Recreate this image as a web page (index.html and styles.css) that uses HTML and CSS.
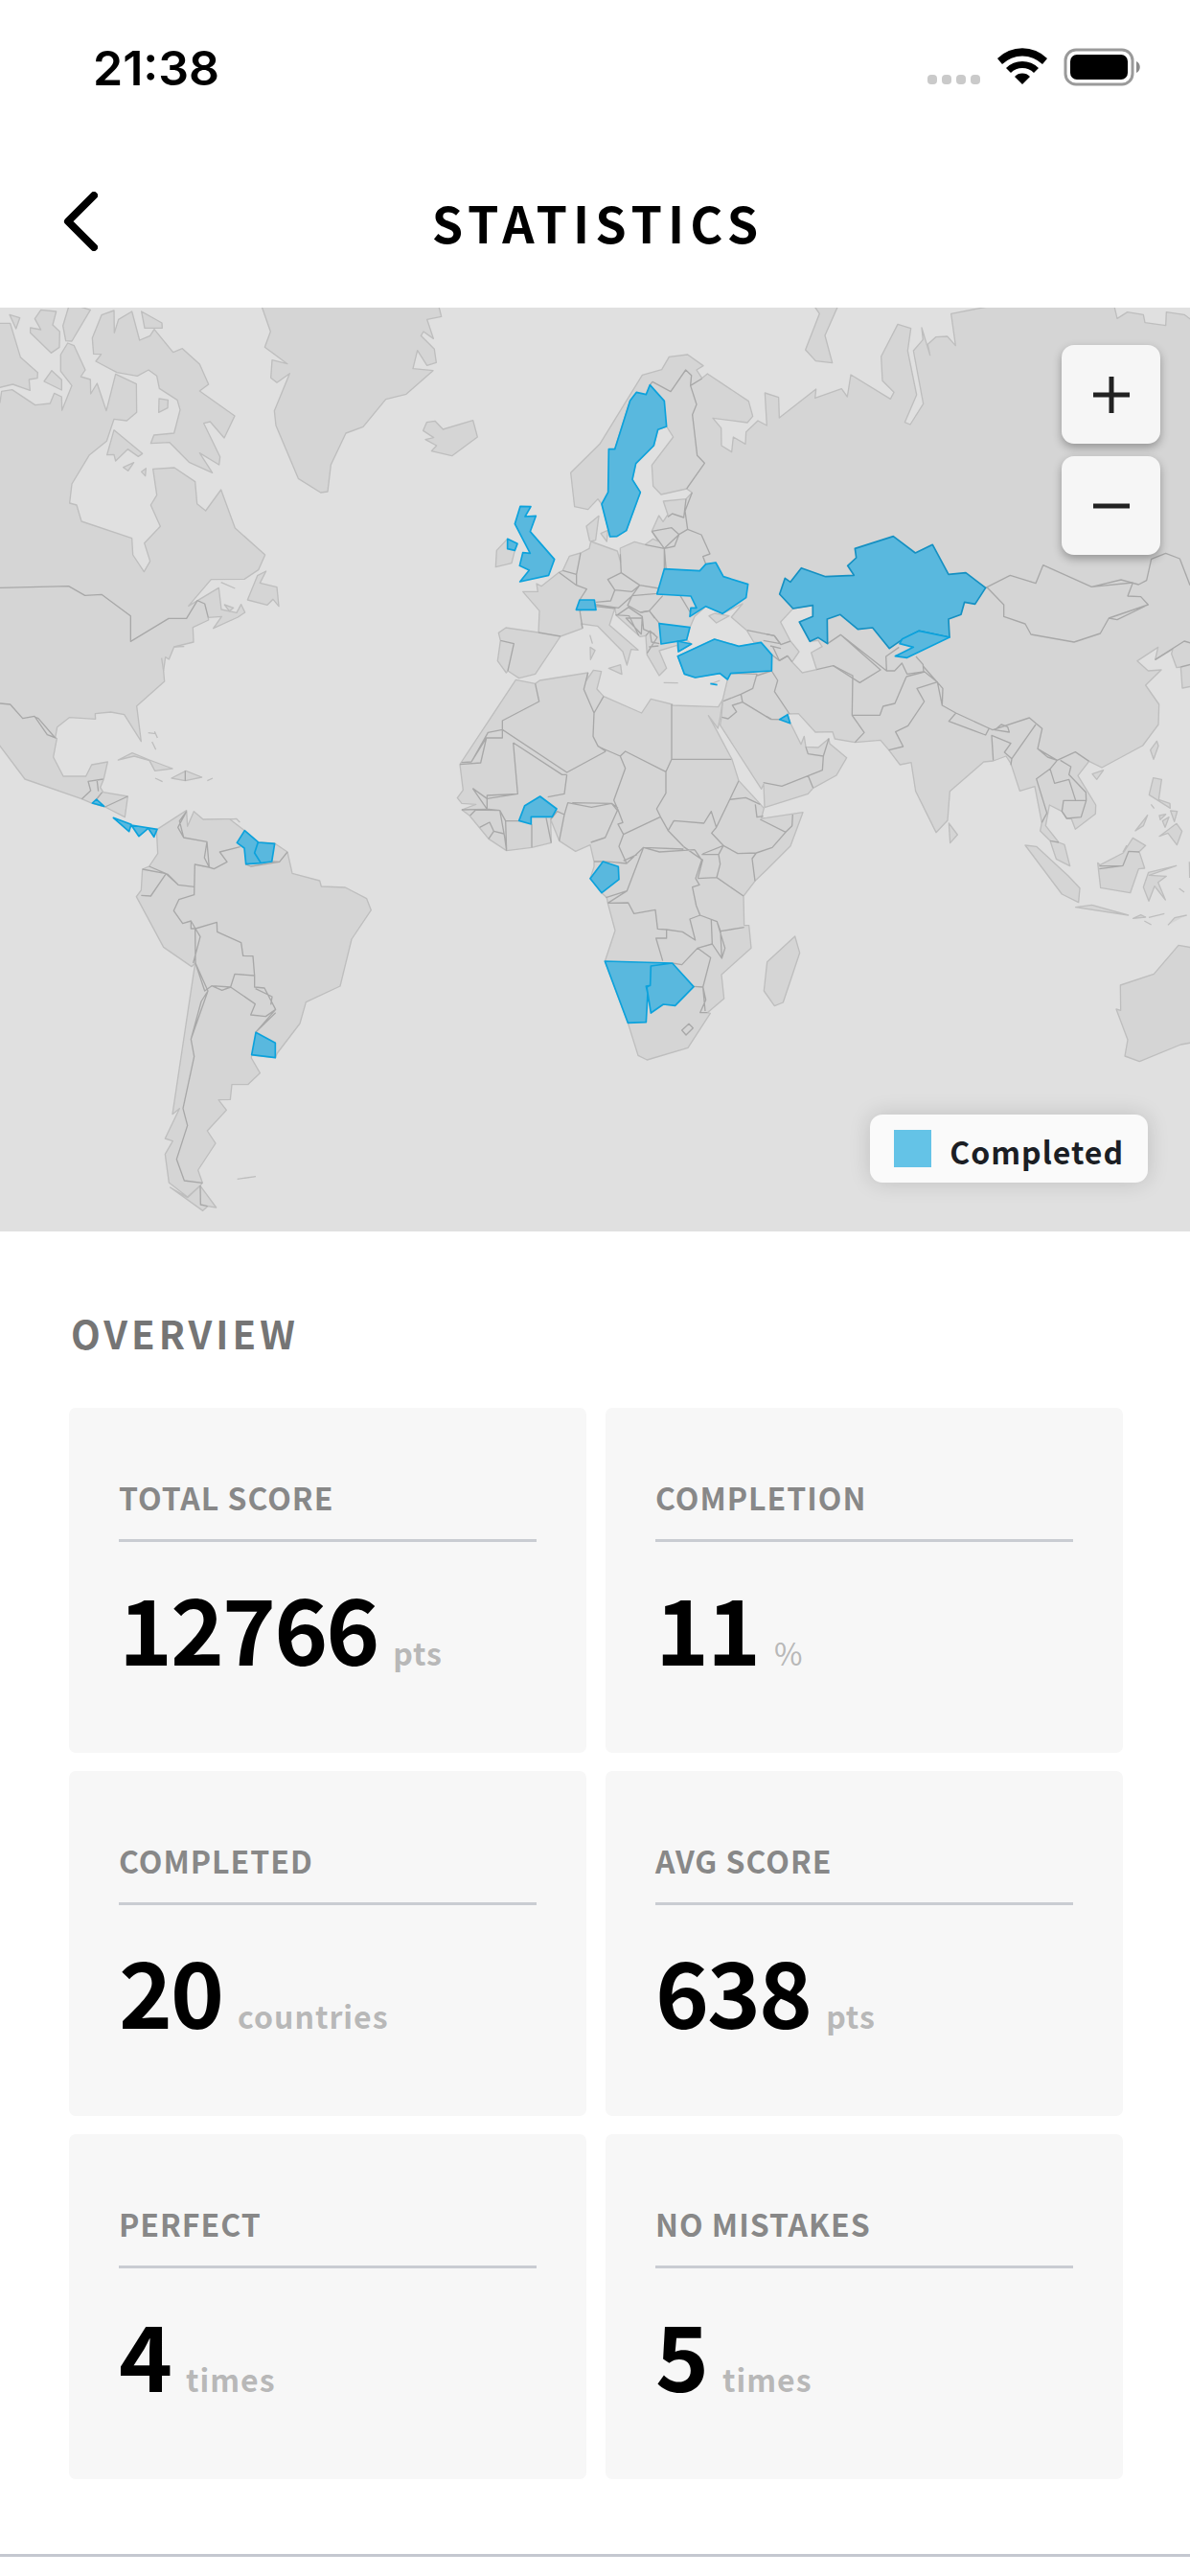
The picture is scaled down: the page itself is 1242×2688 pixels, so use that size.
FILE: index.html
```html
<!DOCTYPE html>
<html lang="en">
<head>
    <meta charset="UTF-8">
    <meta name="viewport" content="width=device-width, initial-scale=1.0">
    <title>Statistics</title>
    <link rel="stylesheet" href="styles.css">
</head>
<body>
    <div class="status">
        <span class="status__time">21:38</span>
        <svg class="status__icons" width="228" height="44" viewBox="0 0 228 44" aria-hidden="true">
            <g fill="#cacaca">
                <rect x="0" y="29" width="10" height="10" rx="4"/><rect x="15" y="29" width="10" height="10" rx="4"/><rect x="30" y="29" width="10" height="10" rx="4"/><rect x="45" y="29" width="10" height="10" rx="4"/>
            </g>
            <path d="M73 12a37 37 0 0 1 52 0l-5 6a30 30 0 0 0-42 0zM82 22a24 24 0 0 1 34 0l-5 5a17 17 0 0 0-24 0zM91 31a11 11 0 0 1 16 0l-8 8z"/>
            <rect x="144" y="3" width="70" height="36" rx="11" fill="none" stroke="#9a9a9a" stroke-width="3"/>
            <rect x="149" y="8" width="60" height="26" rx="7"/>
            <path d="M218 15c5 2 5 10 0 12z" fill="#8a8a8a"/>
        </svg>
    </div>
    <header class="header">
        <button class="header__back" type="button" aria-label="Back">
            <svg width="36" height="62" viewBox="0 0 36 62"><path d="M32 4L5 31l27 27"/></svg>
        </button>
        <h1 class="header__title">STATISTICS</h1>
    </header>

    <div class="map">
        <svg class="map__world" viewBox="0 3 3726 2892" preserveAspectRatio="xMidYMid slice" role="img" aria-label="World map">
            <!-- north america -->
            <g class="land">
                <path d="M-10 300L0 300 5 265 38 260 110 308 157 303 170 271 193 282 194 325 225 247 190 202 190 150 212 114 232 122 267 198 253 219 283 228 284 273 304 240 333 326 362 211 427 242 428 331 397 357 357 352 334 421 280 464 225 555 218 615 240 621 255 672 413 725 416 777 451 830 470 797 452 740 502 688 472 621 491 590 479 508 546 504 611 548 617 617 644 639 692 573 736 693 830 777 809 824 765 853 661 854 590 937 685 880 693 948 741 958 755 932 767 957 745 972 668 1007 694 970 652 973 653 981 604 1004 606 1050 545 1065 529 1104 518 1097 512 1140 515 1173 428 1250 442 1361 389 1277 347 1269 298 1274 299 1291 217 1286 179 1316 173 1350 178 1352 167 1410 198 1470 269 1470 287 1434 337 1425 325 1478 314 1505 323 1520 400 1533 391 1598 329 1566 289 1555 256 1541 78 1479 0 1375-10 1362z"/>
                <path d="M-10 52L32 52 64 158 118 206 117 224 91 228 94 262 40 243-10 255zM30 25L62 35 50 69zM128 10L176 15 165 57 187 78 186 127 160 145 95 82 95 66 128 72 109 38zM215 0L197 60 206 107 225 108 283 10 250 0zM138 234L162 200 193 229 193 261z"/>
                <path d="M318 26L357 12 358 82 371 40 413 15 437 105 470 91 483 71 542 143 571 131 625 180 653 243 625 264 735 342 702 411 658 360 638 365 689 470 686 495 625 458 665 520 592 487 531 425 472 428 482 402 545 396 564 323 555 292 499 256 491 217 465 198 430 217 366 206 300 171 317 149 293 148 289 98zM443 15L507 51 508 67 453 67zM498 288L526 292 525 317 497 331zM357 386L446 460 433 469 400 446 362 483 357 463 335 464zM386 503L419 488 401 514zM443 517L457 506 455 530z"/>
                <path d="M833 828L814 865 867 878 873 938 855 916 837 934 775 918 806 842zM692 863L736 882M703 933L731 943 718 953zM370 1419L414 1397 468 1419 540 1446 485 1453 468 1421 420 1407zM537 1476L582 1453 632 1473 580 1484zM464 1334L488 1337M484 1330L493 1350M476 1362L488 1387M486 1476L509 1487M649 1484L666 1476M545 1065L577 1064M506 1100L512 1140"/>
            </g>
            <path class="border" d="M0 880L215 875 266 904 318 901 409 968 409 1048 528 976 584 976 618 920 641 930 652 973M0 1242L32 1245 71 1289 108 1282 148 1340 175 1350M108 1284L120 1289 173 1350M256 1541L284 1515 276 1486 323 1479M304 1485L308 1517M302 1542L320 1520M329 1566L400 1533M580 1453L580 1484"/>
            <!-- greenland, iceland, ireland -->
            <g class="land">
                <path d="M818 -5L847 78 829 127 900 179 852 167 848 223 867 238 907 209 859 326 864 372 934 538 1004 582 1026 579 1036 495 1083 396 1137 376 1208 290 1272 274 1356 200 1293 194 1307 137 1337 184 1366 175 1360 133 1318 91 1326 78 1357 100 1337 40 1382 31 1373-5z"/>
                <path d="M1325 388L1336 362 1362 358 1387 384 1481 356 1495 408 1415 467 1351 452 1367 435 1332 416 1358 410z"/>
                <path d="M1588 728L1555 763 1552 815 1602 803 1612 763z"/>
            </g>
            <!-- eurasia -->
            <path class="land" d="M3735 45L3708 25 3652 17 3650 59 3585 50 3580 25 3530 17 3498 37 3488-5 3120-5 2978 22 2992 122 2966 93 2930 95 2905 118 2912 152 2886 66 2890 103 2860 138 2891 304 2850 369 2833 362 2870 276 2842 138 2852 68 2811 55 2759 156 2763 232 2799 268 2788 289 2664 213 2653 282 2635 257 2552 286 2555 258 2440 348 2438 284 2395 270 2401 372 2373 357 2336 392 2334 430 2296 408 2291 455 2259 435 2258 380 2232 349 2340 363 2357 343 2344 296 2215 210 2198 224 2181 198 2202 185 2153 150 2095 157 2072 197 2011 214 1878 430 1787 520 1799 626 1841 635 1872 602 1884 618 1910 720 1932 719 1961 701 2005 581 1980 541 1991 491 2047 435 2060 385 2087 375 2108 408 2041 496 2045 562 2070 588 2150 570 2167 582 2148 602 2077 609 2091 651 2076 673 2063 654 2041 703 2061 735 2045 727 2020 745 1987 736 1942 756 1943 800 1933 765 1850 735 1846 732 1836 687 1875 655 1865 731 1850 735 1845 757 1818 771 1783 781 1762 826 1750 832 1695 875 1680 867 1684 892 1637 892 1689 952 1686 1020 1584 1005 1561 1021 1567 1045 1558 1109 1585 1146 1590 1140 1625 1163 1676 1150 1755 1032 1824 1007 1820 993 1871 1000 1950 1080 1963 1122 1976 1073 1998 1075 1908 997 1925 945 1930 967 2004 1033 2022 1030 2026 1090 2064 1155 2087 1132 2064 1077 2120 1060 2124 1080 2165 1056 2150 1043 2160 1005 2175 970 2210 938 2262 961 2325 930 2290 972 2338 1013 2360 1050 2383 1051 2313 1063 2237 1041 2122 1094 2143 1150 2177 1161 2254 1148 2278 1167 2263 1230 2259 1285 2255 1310 2300 1380 2384 1510 2391 1495 2394 1568 2530 1525 2546 1507 2619 1467 2651 1412 2598 1368 2595 1352 2562 1380 2523 1378 2518 1345 2508 1370 2475 1304 2465 1275 2500 1274 2553 1332 2607 1331 2614 1353 2677 1364 2757 1357 2783 1388 2818 1434 2853 1427 2867 1517 2931 1646 2967 1608 2974 1517 3080 1425 3110 1422 3150 1407 3165 1430 3193 1516 3240 1502 3262 1615 3257 1641 3288 1672 3307 1729 3350 1751 3333 1684 3315 1677 3274 1625 3286 1560 3325 1580 3340 1602 3355 1604 3367 1636 3430 1588 3431 1560 3375 1468 3410 1423 3450 1443 3578 1374 3627 1308 3629 1245 3587 1185 3636 1137 3595 1140 3561 1109 3626 1066 3617 1105 3672 1072 3668 1087 3684 1130 3697 1128 3702 1194 3735 1188z"/>
            <path class="water" d="M2483 945L2545 935 2545 970 2503 987 2536 1048 2562 1045 2574 1064 2540 1083 2557 1136 2512 1146 2480 1112 2502 1080 2475 1047 2444 987z"/>
            <path class="land" d="M2553 3L2566 22 2522 135 2554 170 2606 176 2583 90 2625-5 2553-5z"/>
            <g transform="translate(1200 0)">
                <path class="land" d="M1020 968L1038 960 1083 968 1043 990zM681 710L703 700 700 735zM706 1132L743 1121 747 1151zM648 1066L663 1076 649 1105zM647 1028L655 1055M878 1177L923 1178M1028 1180L1054 1170"/>
                <path class="border" d="M725 446L773 294M835 245L843 235 900 266 947 198 965 215 962 247 998 225M962 247L981 306 968 338 983 466 1006 490 950 570M948 602L941 660 905 648 891 658M967 582L945 640 953 697M841 703L903 692 926 713 880 757 841 703M926 713L953 697 996 714 1023 774 1001 782 1010 806M880 757L880 821M880 757L912 750 926 713M820 745L880 757M742 775L745 833 703 854 725 887 779 892 803 872 745 833M803 872L864 882 887 840 880 757M803 872L779 905 857 898 864 882M779 905L765 935 805 957 833 952 875 905M725 887L712 921 666 925M666 933L737 943 779 905M550 832L605 872 637 884 615 918M562 826L605 838 605 872M618 771L605 838M615 949L624 1007M486 1020L555 1032M367 1045L409 1055 390 1140M616 951L664 938 727 945"/>
                <path class="border" d="M730 967L768 941 811 970 808 1025 760 975 811 975M727 965L770 968 800 1030M808 957L833 952 865 992M833 952L850 975M811 970L815 1010 850 1025M822 1030L835 1015 858 1035 826 1085M835 1015L840 1050 865 1055M832 1065L862 1062M930 905L963 960M1140 1013L1224 1030 1243 1055 1190 1045M1217 1090L1240 1108 1266 1093M1212 1062L1245 1070M1088 1148L1170 1150 1157 1195 1120 1213 1065 1235M1216 1140L1170 1155M1120 1213L1125 1238 1214 1292 1243 1292M1125 1238L1093 1248 1106 1268 1080 1290 1060 1285M1216 1140L1235 1170 1225 1205 1272 1275"/>
            </g>
            <g transform="translate(2400 0)">
                <path class="border" d="M686 880L763 841 843 866 866 809 1018 877 1147 864 1131 906 1172 908 1195 933 1072 975 1045 1023 963 1050 828 1026 810 993 743 970 743 933 690 878M1018 877L1110 855 1165 870 1190 857 1205 790 1250 772 1294 789 1326 872M1072 975L1098 980 1195 933M1217 1105L1308 1047 1335 1055M1297 1128L1335 1118M0 1025L25 1030 45 1058 75 1047M20 1065L40 1108 66 1093 80 1112M191 1055L232 1027 357 1137 292 1177 209 1124 157 1136M232 1027L376 1140 374 1095 415 1066M376 1140L401 1140 424 1116 440 1150 492 1143 490 1120 468 1095"/>
                <path class="border" d="M209 1124L270 1155 268 1279 355 1279 365 1251 402 1242 438 1158M438 1158L495 1143 535 1175 471 1195 494 1236 443 1312 404 1331 428 1377 383 1388M490 1125L552 1195 550 1248M268 1279L306 1333 277 1364M535 1175L550 1248 593 1272 697 1320 708 1325 823 1287 863 1321 849 1384 910 1420M593 1272L571 1298 686 1341 697 1320M715 1325L735 1308 755 1315 760 1332zM710 1420L705 1342 765 1367 745 1395 768 1415 765 1435M768 1415L843 1308M849 1384L880 1410 910 1420 888 1447 845 1478 878 1585 862 1615M888 1447L902 1492 947 1480 968 1546M930 1546L1001 1546 985 1598 940 1602 925 1580zM920 1420L953 1440 947 1465 1000 1520 1001 1546M910 1420L967 1394 1010 1423M888 1672L915 1677M123 1378L130 1400 178 1407 195 1352M178 1407L175 1451 48 1501-10 1490M130 1468L146 1507M0 1283L15 1291 41 1292"/>
            </g>
            <!-- africa -->
            <g transform="translate(1200 1380)">
                <path class="land" d="M415 -212L476 -200 490 -210 641 -234 636 -210 658 -242 683 -238 669 -183 690 -160 809 -108 838 -152 905 -135 905 -132 1049 -127 1063 -150 1055 -95 1048 -60 1018 -100 1043 -55 1092 37 1113 104 1165 160 1192 190 1184 222 1200 220 1314 203 1275 308 1200 383 1164 418 1128 465 1130 557 1145 557 1152 628 1059 711 1067 786 1015 830 1024 832 954 940 826 978 798 964 766 862 694 670 726 573 703 487 700 470 684 455 648 410 660 373 660 357 648 305 602 325 551 292 524 225 526 298 465 313 386 323 330 286 270 213 246 195 290 178 246 175 232 158 250 133 240 53 245 45z"/>
                <path class="land" d="M1289 591L1304 643 1252 798 1225 809 1192 762 1202 671z"/>
                <path class="border" d="M476 -200L488 -144 373 -84 373 -56 328 -47 276 45 245 47M373 -56L373 -30 323 -30 305 48 240 53M323 -30L276 45M373 -56L575 78 697 12M407 -15L421 145 325 150 325 193M407 -15L560 85 575 85M641 -234L628 -182 660 -108 657 -35 672 -5 697 12M690 -160L660 -108M680 0L742 27 758 12 885 76M903 -135L903 37 1090 37M903 37L885 76 885 143 856 192 868 217 892 260 940 310M742 27L758 65 722 165 735 195 750 235 735 240 752 272 868 217M575 85L567 145 515 155M551 292L567 210 578 173 652 187 715 175 733 197 695 282 650 297M592 173L715 175 735 190M510 220L526 298M524 225L545 200 567 210M465 240L465 313M383 230L386 323M383 230L425 230M272 213L290 195 365 197 383 230M302 250L333 234 346 262 330 286M346 262L378 270M365 197L380 280 386 323M280 128L325 160M280 128L325 193M246 195L330 193 365 197M325 160L421 145"/>
                <path class="border" d="M752 272L738 310 762 363 712 358 686 357 660 357M762 363L815 313 865 327 975 320M752 355L795 335M815 313L763 449 697 470M815 313L940 318M703 487L763 449M703 487L767 486 785 520 852 508 859 568 887 570 887 597 854 597 875 668M887 570L937 577 977 603 960 537 992 525M975 320L997 352 978 410 990 430 968 437 980 495 992 525M940 310L975 335 1000 352 985 410M992 525L1045 545 1056 575 1130 563M1027 540L1030 615 1060 660 1070 628 1045 545M1056 575L1060 660M1030 615L984 628 935 680 905 675M984 628L1025 658 1001 750 972 748M1001 750L1010 790 992 830 1015 830M1001 750L1008 825M935 885L957 865 970 878 948 900zM997 335L1050 335 1055 365 1044 407 985 410M1044 407L1128 465M1050 335L1065 307 1110 332 1168 330 1155 348 1164 418M892 260L910 229 1004 237 1027 200 1043 250 1028 268 1065 307 1000 333M1043 250L1085 163 1113 104M1085 163L1135 157 1180 178M1165 178L1170 218 1190 215M1168 330L1218 313 1260 265 1180 225M1260 265L1280 245 1282 210"/>
            </g>
            <!-- south america -->
            <g transform="translate(0 1380)">
                <path class="land" d="M492 256L584 197 587 247 607 200 636 225 740 223 750 233 740 223 720 225 766 260 808 296 860 300 900 327 915 394 1001 417 1006 435 1081 438 1148 473 1162 509 1101 600 1065 747 958 797 939 864 868 957 862 971 788 963 787 972 814 1019 776 1055 726 1055 721 1102 684 1103 709 1135 649 1200 675 1239 620 1323 634 1363 628 1370 587 1407 529 1362 517 1273 541 1232 517 1224 562 1130 540 1148 611 675 600 686 512 625 427 467 442 447 446 381 467 372 494 332 490 256zM533 1377L587 1409 627 1372 677 1440 650 1436 635 1450zM743 1351L801 1343"/>
                <path class="border" d="M584 200L557 250 575 282 648 295 655 375 670 380 711 358 688 327 752 311M584 200L562 230 575 282M648 295L640 345 655 375M655 375L610 366 608 461 560 476 544 511 572 551 598 543 612 567 679 547 680 577 755 611 761 652 792 653 797 714 797 750 828 753 863 820 832 842 785 837 799 803 722 750 735 709 797 714M467 372L525 397 558 430 608 436M446 381L520 395 472 465 442 463M520 395L558 430M598 543L598 567 612 567 627 592 605 675M611 567L612 675 651 762 598 913 608 967 573 1130 587 1183 553 1289 577 1356 634 1363M651 762L630 795 598 913M612 675L641 762 663 746 695 760 722 750M663 746L722 750M800 755L852 780 848 805M863 830L800 892M863 820L800 892M851 357L875 358 900 327M768 365L785 372 875 358M627 1372L628 1431 650 1436"/>
            </g>
            <!-- south east asia, australia -->
            <g transform="translate(2400 1380)">
                <path class="land" d="M571 237L598 273 575 299zM810 306L845 310 945 402 981 440 977 485 925 459zM968 500L1019 493 1133 525zM1037 361L1044 368 1117 330 1147 283 1187 307 1167 326 1184 378 1165 380 1139 455 1046 439zM1283 370L1196 391 1180 437 1197 481 1215 434 1249 477 1226 422 1252 403 1198 400zM1211 95L1237 100 1228 163 1263 175 1264 190 1198 148zM1265 198L1286 200 1277 232zM1230 278L1284 238 1301 262 1285 305 1257 268zM1193 212L1155 261 1180 245zM1230 213L1250 209 1233 226zM1260 218L1240 230 1248 250zM1204 178L1214 191M1148 535L1172 524 1187 531zM1197 532L1246 520M1183 543L1205 555M1257 556L1278 533 1316 525M1292 441L1308 453M1020 83L1055 71 1034 100zM1222 -20L1227 -5 1212 37 1202 8zM1324 358L1325 408M1116 328L1128 306"/>
                <path class="land" d="M1335 627L1290 619 1213 709 1108 744 1109 823 1095 819 1131 915 1122 966 1168 983 1297 930 1340 922z"/>
                <path class="border" d="M1042 371L1116 370 1134 325 1167 327M1042 380L1116 370"/>
            </g>
            <!-- completed countries -->
            <g class="done">
                <path d="M302 1542L326 1564 289 1554zM355 1600L411 1621 404 1643zM411 1623L492 1636 482 1660 464 1633 435 1658z"/>
                <path d="M766 1640L808 1676 797 1710 817 1742 770 1745 765 1695 742 1678zM808 1677L860 1681 851 1737 817 1742 797 1710zM801 2272L862 2305 862 2351 788 2342z"/>
                <g transform="translate(1200 0)">
                    <path d="M429 625L462 626 444 657 478 655 460 704 536 791 518 841 428 861 457 825 427 811 437 770 460 772 412 680zM389 727L420 742 412 763 389 758z"/>
                    <path d="M835 245L880 295 887 375 860 385 847 435 791 491 780 541 805 581 761 701 732 719 710 720 684 618 704 581 706 446 725 446 773 294 793 268 823 275z"/>
                    <path d="M615 918L661 918 666 949 604 949zM880 821L991 827 1010 806 1041 801 1065 845 1142 869 1136 911 1062 961 1010 938 960 970 963 943 981 943 963 906 857 900zM864 992L960 1004 950 1043 870 1056z"/>
                    <path d="M922 1047L965 1056 924 1080zM922 1094L1037 1041 1113 1063 1183 1051 1217 1090 1216 1140 1088 1148 1078 1167 1054 1148 977 1161 943 1150zM1024 1180L1046 1184"/>
                </g>
                <g transform="translate(2400 0)">
                    <path class="done--inland" d="M397 719L466 771 520 745 570 838 624 833 686 880 653 931 620 925 609 964 570 978 573 1035 478 1015 425 1042 385 1070 332 1005 286 1010 231 964 190 978 191 1055 162 1036 136 1048 103 987 145 970 145 935 83 945 41 900 58 850 75 862 109 818 185 845 274 841 254 811 281 786 277 757z"/>
                    <path d="M425 1040L478 1015 573 1035 440 1099 403 1094 460 1066 417 1055zM66 1277L74 1304 41 1292z"/>
                </g>
                <g transform="translate(1200 1380)">
                    <path d="M491 153L543 192 529 217 463 217 463 240 425 229 443 182zM688 357L736 373 738 413 684 455 648 410z"/>
                    <path d="M694 669L905 675 838 684 836 745 823 747 828 770 823 860 766 862zM838 684L905 675 972 749 914 808 877 804 838 831 825 750 836 745z"/>
                </g>
            </g>
        </svg>
        <div class="map__zoom">
            <button class="map__btn" type="button" aria-label="Zoom in">
                <svg width="38" height="38" viewBox="0 0 38 38"><path d="M0 19h38M19 0v38"/></svg>
            </button>
            <button class="map__btn" type="button" aria-label="Zoom out">
                <svg width="38" height="38" viewBox="0 0 38 38"><path d="M0 19h38"/></svg>
            </button>
        </div>
        <div class="map__legend"><i class="map__swatch"></i><span class="map__name">Completed</span></div>
    </div>

    <main class="overview">
        <h2 class="overview__title">OVERVIEW</h2>
        <dl class="cards">
            <div class="card">
                <dt class="card__label">TOTAL SCORE</dt>
                <dd class="card__value">12766<span class="card__unit">pts</span></dd>
            </div>
            <div class="card">
                <dt class="card__label">COMPLETION</dt>
                <dd class="card__value">11<span class="card__unit card__unit--sign">%</span></dd>
            </div>
            <div class="card">
                <dt class="card__label">COMPLETED</dt>
                <dd class="card__value">20<span class="card__unit">countries</span></dd>
            </div>
            <div class="card">
                <dt class="card__label">AVG SCORE</dt>
                <dd class="card__value">638<span class="card__unit">pts</span></dd>
            </div>
            <div class="card">
                <dt class="card__label">PERFECT</dt>
                <dd class="card__value">4<span class="card__unit">times</span></dd>
            </div>
            <div class="card">
                <dt class="card__label">NO MISTAKES</dt>
                <dd class="card__value">5<span class="card__unit">times</span></dd>
            </div>
        </dl>
    </main>
    <hr class="divider">
</body>
</html>
```
FILE: styles.css
```css
* {
    box-sizing: border-box;
}
body {
    margin: 0;
    background: #fff;
    color: #000;
    font-family: "Noto Sans CJK SC", "Noto Sans", sans-serif;
}
button {
    border: 0;
    padding: 0;
    cursor: pointer;
}
.status {
    display: flex;
    justify-content: space-between;
    align-items: center;
    height: 141px;
    padding: 0 46px 0 97px;
}
.status__time {
    font: 600 50px/60px Inter, sans-serif;
}
.header {
    display: grid;
    grid-template-columns: 1fr auto 1fr;
    align-items: center;
    height: 180px;
    padding: 0 66px;
}
.header__back {
    display: flex;
    justify-self: start;
    background: none;
}
.header__back path {
    fill: none;
    stroke: #000;
    stroke-width: 8px;
    stroke-linecap: round;
    stroke-linejoin: round;
}
.header__title {
    margin: 0;
    padding: 2px 0 0 6px;
    font-size: 52px;
    line-height: 76px;
    font-weight: 700;
    letter-spacing: 6px;
}

/* map */
.map {
    position: relative;
    background: #e0e0e0;
    overflow: hidden;
}
.map__world {
    display: block;
    width: 100%;
}
.land {
    fill: #d5d5d5;
    stroke: #bebebe;
    stroke-width: 4px;
    stroke-linejoin: round;
}
.water {
    fill: #e0e0e0;
    stroke: #bebebe;
    stroke-width: 4px;
}
.border {
    fill: none;
    stroke: #a8a8a8;
    stroke-width: 4px;
    stroke-linejoin: round;
}
.done {
    fill: #59b8de;
    stroke: #0ca2dc;
    stroke-width: 5px;
    stroke-linejoin: round;
}
.done--inland {
    stroke: #1590c2;
}
.map__zoom {
    position: absolute;
    top: 39px;
    right: 31px;
    display: flex;
    flex-direction: column;
    gap: 13px;
}
.map__btn {
    display: flex;
    align-items: center;
    justify-content: center;
    width: 103px;
    height: 103px;
    border-radius: 13px;
    background: #f6f6f6;
    box-shadow: 0 4px 10px rgba(0, 0, 0, .3);
}
.map__btn path {
    stroke: #222;
    stroke-width: 5px;
}
.map__legend {
    position: absolute;
    right: 44px;
    bottom: 51px;
    display: flex;
    align-items: center;
    gap: 19px;
    height: 71px;
    padding: 0 25px;
    border-radius: 13px;
    background: #fafafa;
    box-shadow: 0 0 22px rgba(0, 0, 0, .15);
    color: #1b1e24;
    font-size: 32px;
    font-weight: 700;
    letter-spacing: 1px;
}
.map__swatch {
    width: 39px;
    height: 39px;
    background: #64c3e7;
}
.map__name {
    padding-top: 5px;
}

/* overview */
.overview {
    padding: 76px 70px 78px 72px;
}
.overview__title {
    margin: 0 0 48px 2px;
    color: #757575;
    font-size: 40px;
    line-height: 60px;
    font-weight: 700;
    letter-spacing: 4px;
}
.cards {
    display: grid;
    grid-template-columns: 1fr 1fr;
    gap: 19px 20px;
    margin: 0;
}
.card {
    height: 360px;
    padding: 68px 52px;
    border-radius: 7px;
    background: #f7f7f7;
}
.card__label {
    padding-bottom: 19px;
    border-bottom: 3px solid #c9ccd2;
    color: #888;
    font-size: 32px;
    line-height: 50px;
    font-weight: 700;
    letter-spacing: 1px;
}
.card__value {
    margin: 18px 0 0;
    font-size: 95px;
    line-height: 140px;
    font-weight: 700;
    letter-spacing: -2px;
}
.card__unit {
    margin-left: 16px;
    color: #b8b8b8;
    font-size: 32px;
    font-weight: 700;
    letter-spacing: 1px;
}
.card__unit--sign {
    font-weight: 400;
}
.divider {
    margin: 0;
    border: 0;
    border-top: 3px solid #c5c8d0;
}
```
